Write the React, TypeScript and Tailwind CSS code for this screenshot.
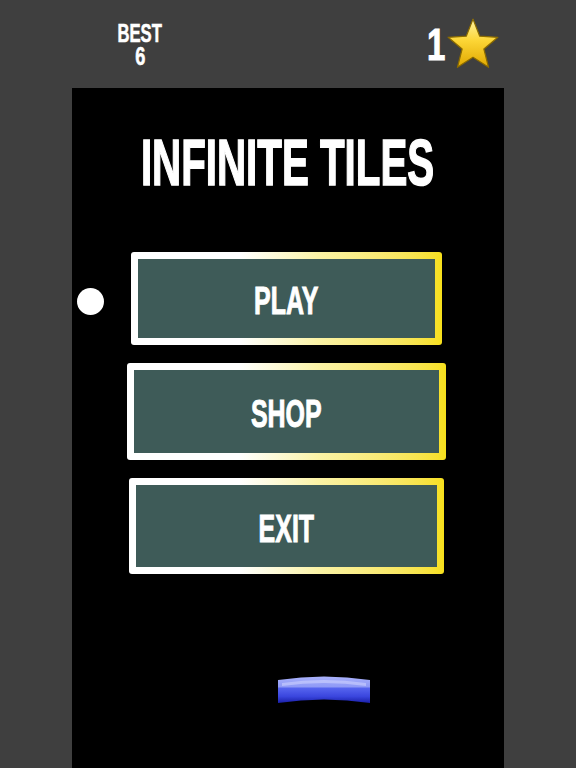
import * as React from 'react'

const FONT = { fontFamily: '"Liberation Sans", Arial, sans-serif' }

// ─── Star ─────────────────────────────────────────────────────────────────────

function Star() {
  return (
    <svg width="56" height="54" viewBox="0 0 54 52">
      <defs>
        <linearGradient id="starFill" x1="0" y1="0" x2="0" y2="1">
          <stop offset="0" stopColor="#fff3a0" />
          <stop offset="0.45" stopColor="#fcd535" />
          <stop offset="1" stopColor="#e0a800" />
        </linearGradient>
      </defs>
      <path
        d="M27 2 L33.5 18.5 L51 19.5 L37.5 30.8 L42 48.5 L27 38.8 L12 48.5 L16.5 30.8 L3 19.5 L20.5 18.5 Z"
        fill="url(#starFill)"
        stroke="#8a6a00"
        strokeWidth="1.2"
        strokeLinejoin="round"
      />
    </svg>
  )
}

// ─── Paddle ───────────────────────────────────────────────────────────────────

function Paddle() {
  return (
    <svg width="96" height="30" viewBox="0 0 96 30">
      <defs>
        <linearGradient id="padFill" x1="0" y1="0" x2="0" y2="1">
          <stop offset="0" stopColor="#aab2fb" />
          <stop offset="0.38" stopColor="#8f9af6" />
          <stop offset="0.45" stopColor="#5563ee" />
          <stop offset="0.75" stopColor="#3a46de" />
          <stop offset="1" stopColor="#1a1fa8" />
        </linearGradient>
      </defs>
      <path d="M2 5 Q48 -2 94 5 L94 28 Q48 21 2 28 Z" fill="url(#padFill)" />
      <path d="M6 8 Q48 2 90 8 L90 11 Q48 5 6 11 Z" fill="#d2d6ff" opacity="0.55" />
    </svg>
  )
}

// ─── MenuButton ───────────────────────────────────────────────────────────────

function MenuButton({ label, className }: { label: string; className: string }) {
  return (
    <div
      className={`rounded-[3px] p-[7px] bg-gradient-to-r from-white from-35% via-[#fbf3a6] via-60% to-[#f7e01a] ${className}`}
    >
      <div className="w-full h-full bg-[#3e5b58] flex items-center justify-center pt-[4px]">
        <span className="inline-block whitespace-nowrap scale-x-[0.64] text-white font-bold text-[39px] leading-none [-webkit-text-stroke:1px_white]">
          {label}
        </span>
      </div>
    </div>
  )
}

export default function App() {
  return (
    <div className="w-[576px] h-[768px] bg-[#3f3f3f] flex flex-col overflow-hidden" style={FONT}>
      {/* Top bar */}
      <div className="h-[88px] flex items-start justify-between">
        <div className="ml-[108px] mt-[22px] w-[64px] flex flex-col items-center gap-[1px] text-white font-bold [-webkit-text-stroke:0.6px_white]">
          <span className="inline-block scale-x-[0.64] text-[26px] leading-[22px]">BEST</span>
          <span className="inline-block scale-x-[0.7] text-[26px] leading-[22px]">6</span>
        </div>
        <div className="mr-[75px] mt-[17px] flex items-center">
          <span className="inline-block scale-x-[0.75] text-white font-bold text-[44px] leading-none mr-[-3px] mt-[2px] [-webkit-text-stroke:1px_white]">1</span>
          <Star />
        </div>
      </div>

      {/* Game panel */}
      <div className="mx-[72px] flex-1 bg-black flex flex-col">
        <div className="mt-[42px] h-[67px] flex justify-center">
          <h1 className="inline-block whitespace-nowrap scale-x-[0.62] text-white font-bold text-[65px] leading-none [-webkit-text-stroke:1.5px_white]">
            INFINITE TILES
          </h1>
        </div>

        <div className="mt-[55px] flex items-center">
          <div className="ml-[5px] mt-[5px] w-[27px] h-[27px] rounded-full bg-white" />
          <MenuButton label="PLAY" className="ml-[27px] w-[311px] h-[93px]" />
        </div>

        <MenuButton label="SHOP" className="mt-[18px] ml-[55px] w-[319px] h-[97px]" />
        <MenuButton label="EXIT" className="mt-[18px] ml-[57px] w-[315px] h-[96px]" />

        <div className="mt-[101px] ml-[204px]">
          <Paddle />
        </div>
      </div>
    </div>
  )
}
